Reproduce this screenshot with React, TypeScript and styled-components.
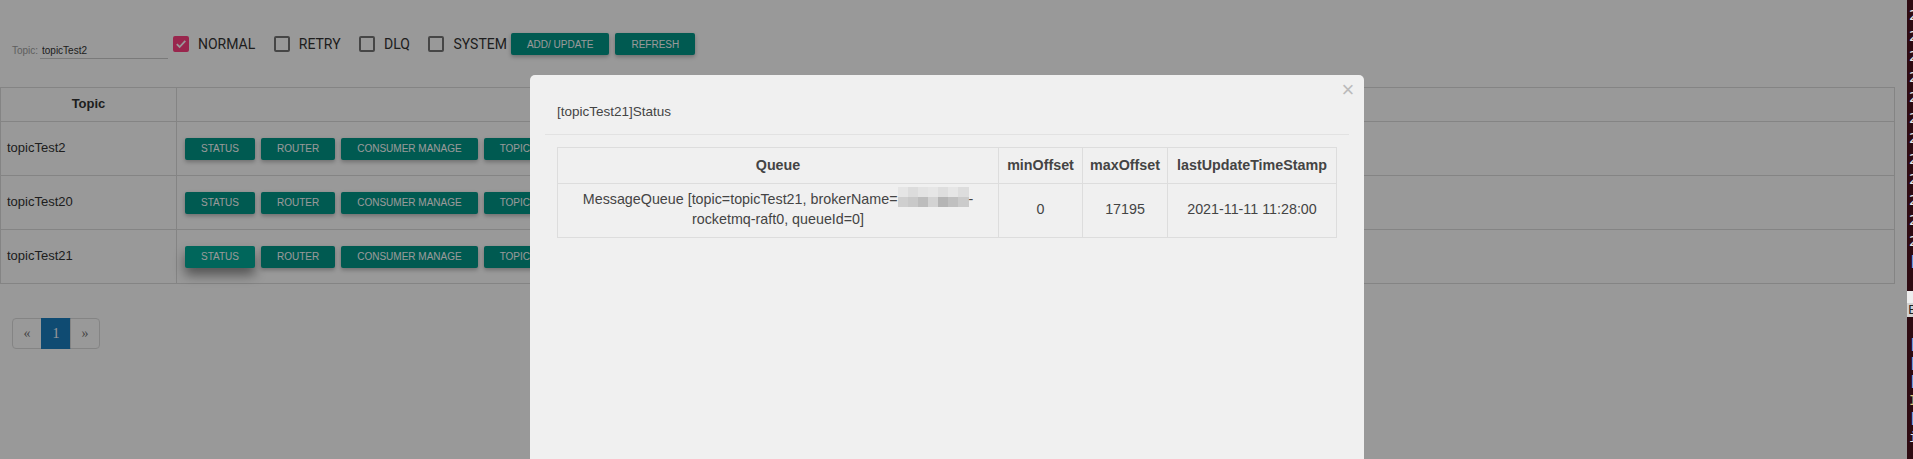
import React from 'react';
import styled, { createGlobalStyle, css } from 'styled-components';

const GlobalStyle = createGlobalStyle`
  html, body {
    margin: 0;
    padding: 0;
    overflow: hidden;
    background: #2e0b12;
  }
  * {
    box-sizing: border-box;
  }
`;

const Screen = styled.div`
  display: flex;
  width: 1913px;
  height: 459px;
  overflow: hidden;
`;

const Page = styled.main`
  position: relative;
  flex: 1;
  height: 100%;
  overflow: hidden;
  padding-right: 12px;
  background: #fff;
  color: #333;
  font-family: 'Liberation Sans', Arial, sans-serif;
  font-size: 13px;
  line-height: 1.42857;
`;

const Toolbar = styled.div`
  display: flex;
  align-items: flex-start;
  height: 87px;
  padding: 33px 0 0 12px;
`;

const TopicField = styled.label`
  display: flex;
  align-items: flex-end;
  height: 26px;
  margin-right: 5px;
`;

const FieldLabel = styled.span`
  width: 28px;
  padding-bottom: 2px;
  font-size: 10px;
  line-height: 12px;
  color: #9e9e9e;
`;

const FieldInput = styled.input`
  width: 128px;
  height: 17px;
  padding: 0 2px;
  border: 0;
  border-bottom: 1px solid #ccc;
  background: transparent;
  font-family: 'Liberation Sans', Arial, sans-serif;
  font-size: 10px;
  color: #333;
  outline: none;
`;

const CheckGroup = styled.div`
  display: flex;
  gap: 18.5px;
  margin-top: 3px;
`;

const Check = styled.label`
  display: flex;
  align-items: center;
  gap: 9px;
  font-family: Roboto, 'Liberation Sans', sans-serif;
  font-size: 14px;
  line-height: 16px;
  color: #333;
`;

const CheckBox = styled.span<{ $checked?: boolean }>`
  display: flex;
  align-items: center;
  justify-content: center;
  width: 16px;
  height: 16px;
  border: 2px solid rgba(0, 0, 0, 0.54);
  border-radius: 2px;
  ${(p) =>
    p.$checked &&
    css`
      background: #ff4081;
      border-color: #ff4081;
    `}
`;

const ButtonGroup = styled.div`
  display: flex;
  gap: 6px;
  margin-left: 4px;
`;

const RaisedButton = styled.button<{ $focused?: boolean }>`
  height: 22px;
  padding: 0 16px;
  border: 0;
  border-radius: 2px;
  background: #009688;
  color: #fff;
  font-family: 'Liberation Sans', Arial, sans-serif;
  font-size: 10px;
  text-transform: uppercase;
  white-space: nowrap;
  box-shadow: 0 2px 4px rgba(0, 0, 0, 0.28);
  ${(p) =>
    p.$focused &&
    css`
      background: #00aa98;
      box-shadow: 0 7px 12px rgba(0, 0, 0, 0.45);
    `}
`;

const TopicTable = styled.table`
  width: 100%;
  border-collapse: collapse;
  border: 1px solid #ddd;
`;

const HeadCell = styled.th<{ $width?: number }>`
  width: ${(p) => (p.$width ? `${p.$width}px` : 'auto')};
  height: 34px;
  padding: 0 8px;
  border: 1px solid #ddd;
  font-weight: bold;
  text-align: center;
`;

const Cell = styled.td`
  height: 54px;
  padding: 0 6px;
  border: 1px solid #ddd;
  vertical-align: middle;
`;

const ActionCell = styled(Cell)`
  padding: 0 8px;
`;

const ActionBar = styled.div`
  display: flex;
  gap: 6px;
`;

const Pager = styled.nav`
  display: inline-flex;
  margin: 34px 0 0 12px;
`;

const PageItem = styled.span<{ $active?: boolean }>`
  width: 30px;
  padding: 5px 0;
  margin-left: -1px;
  border: 1px solid #ddd;
  font-family: 'Liberation Serif', 'Times New Roman', serif;
  font-size: 14px;
  line-height: 19px;
  text-align: center;
  color: #777;
  &:first-child {
    margin-left: 0;
    border-radius: 4px 0 0 4px;
  }
  &:last-child {
    border-radius: 0 4px 4px 0;
  }
  ${(p) =>
    p.$active &&
    css`
      background: #1a7dbf;
      border-color: #1a7dbf;
      color: #fff;
    `}
`;

const Backdrop = styled.div`
  position: absolute;
  inset: 0;
  background: rgba(0, 0, 0, 0.4);
`;

const Dialog = styled.section`
  position: absolute;
  left: 530px;
  top: 75px;
  width: 834px;
  height: 460px;
  padding: 15px;
  border-radius: 5px;
  background: #f0f0f0;
  color: #444;
  font-family: 'Liberation Sans', Helvetica, sans-serif;
  font-size: 14.3px;
`;

const CloseButton = styled.button`
  position: absolute;
  top: 0;
  right: 1px;
  width: 30px;
  height: 30px;
  padding: 0;
  border: 0;
  background: transparent;
  font-family: 'Liberation Sans', Helvetica, sans-serif;
  font-size: 22px;
  line-height: 26px;
  color: #bbb;
`;

const DialogHeader = styled.header`
  padding: 12px;
  border-bottom: 1px solid #e2e2e2;
`;

const DialogTitle = styled.h4`
  margin: 0;
  font-size: 13.5px;
  font-weight: normal;
  line-height: 20px;
`;

const DialogBody = styled.div`
  padding: 12px;
`;

const StatusTable = styled.table`
  width: 100%;
  border-collapse: collapse;
  border: 1px solid #ddd;
  line-height: 19.5px;
`;

const StatusHead = styled.th<{ $width: number }>`
  width: ${(p) => p.$width}px;
  padding: 8px 6px;
  line-height: 19px;
  border: 1px solid #ddd;
  text-align: center;
  font-weight: bold;
  white-space: nowrap;
`;

const StatusCell = styled.td`
  padding: 6px 8px 8px;
  border: 1px solid #ddd;
  text-align: center;
  vertical-align: middle;
`;

const NoBreak = styled.span`
  white-space: nowrap;
`;

/* pixelated (redacted) broker name */
const Mosaic = styled.span`
  display: inline-block;
  width: 71px;
  height: 20px;
  margin-top: -4px;
  overflow: hidden;
  vertical-align: -3px;
`;

const MosaicGrid = styled.span`
  display: grid;
  grid-template-columns: repeat(7, 1fr);
  grid-template-rows: 10px 10px;
  height: 100%;
`;

const Tile = styled.span<{ $shade: string }>`
  background: ${(p) => p.$shade};
`;

const Terminal = styled.aside`
  display: flex;
  flex-direction: column;
  width: 6px;
  height: 100%;
  overflow: hidden;
  background: #2e0b12;
`;

const TermPane = styled.div<{ $line: number; $top: number; $height: number }>`
  flex: none;
  height: ${(p) => p.$height}px;
  overflow: hidden;
  padding: ${(p) => p.$top}px 0 0 2px;
  font-family: 'DejaVu Sans Mono', 'Liberation Mono', monospace;
  font-size: 14px;
  line-height: ${(p) => p.$line}px;
  white-space: pre;
  color: #e8e8e8;
`;

const TermLine = styled.div<{ $tone?: string }>`
  color: ${(p) => p.$tone || '#e8e8e8'};
`;

const TermTab = styled.div<{ $shade: string; $height: number }>`
  flex: none;
  height: ${(p) => p.$height}px;
  overflow: hidden;
  padding-left: 1px;
  font-family: 'DejaVu Sans', sans-serif;
  font-size: 13px;
  line-height: ${(p) => p.$height}px;
  white-space: pre;
  color: #222;
  background: ${(p) => p.$shade};
`;

const topics = ['topicTest2', 'topicTest20', 'topicTest21'];
const actions = ['Status', 'Router', 'Consumer Manage', 'Topic Config', 'Send Message', 'Reset Consumer Offset', 'Delete'];
const filters = [
  { name: 'NORMAL', checked: true },
  { name: 'RETRY', checked: false },
  { name: 'DLQ', checked: false },
  { name: 'SYSTEM', checked: false },
];
const mosaic = [
  '#e5e5e5', '#dcdcdc', '#e3e3e3', '#e6e6e6', '#dedede', '#e6e6e6', '#dddddd',
  '#cfcfcf', '#c9c9c9', '#bdbdbd', '#d3d3d3', '#b5b5b5', '#c0c0c0', '#cbcbcb',
];
const logLines = Array.from({ length: 12 }, (_, i) => `2021-11-11 11:28:${String(i).padStart(2, '0')} INFO`);

export default function App() {
  return (
    <>
      <GlobalStyle />
      <Screen>
        <Page>
          <Toolbar>
            <TopicField>
              <FieldLabel>Topic:</FieldLabel>
              <FieldInput defaultValue="topicTest2" />
            </TopicField>
            <CheckGroup>
              {filters.map((f) => (
                <Check key={f.name}>
                  <CheckBox $checked={f.checked}>
                    {f.checked && (
                      <svg width="12" height="12" viewBox="0 0 12 12">
                        <path d="M1.8 6.2 L4.6 9 L10.3 2.9" fill="none" stroke="#fff" strokeWidth="1.8" />
                      </svg>
                    )}
                  </CheckBox>
                  {f.name}
                </Check>
              ))}
            </CheckGroup>
            <ButtonGroup>
              <RaisedButton>Add/ Update</RaisedButton>
              <RaisedButton>Refresh</RaisedButton>
            </ButtonGroup>
          </Toolbar>

          <TopicTable>
            <thead>
              <tr>
                <HeadCell $width={176}>Topic</HeadCell>
                <HeadCell />
              </tr>
            </thead>
            <tbody>
              {topics.map((t, row) => (
                <tr key={t}>
                  <Cell>{t}</Cell>
                  <ActionCell>
                    <ActionBar>
                      {actions.map((a, i) => (
                        <RaisedButton key={a} $focused={row === 2 && i === 0}>
                          {a}
                        </RaisedButton>
                      ))}
                    </ActionBar>
                  </ActionCell>
                </tr>
              ))}
            </tbody>
          </TopicTable>

          <Pager>
            <PageItem>«</PageItem>
            <PageItem $active>1</PageItem>
            <PageItem>»</PageItem>
          </Pager>

          <Backdrop />
          <Dialog>
            <CloseButton>×</CloseButton>
            <DialogHeader>
              <DialogTitle>[topicTest21]Status</DialogTitle>
            </DialogHeader>
            <DialogBody>
              <StatusTable>
                <thead>
                  <tr>
                    <StatusHead $width={442}>Queue</StatusHead>
                    <StatusHead $width={84}>minOffset</StatusHead>
                    <StatusHead $width={85}>maxOffset</StatusHead>
                    <StatusHead $width={169}>lastUpdateTimeStamp</StatusHead>
                  </tr>
                </thead>
                <tbody>
                  <tr>
                    <StatusCell>
                      MessageQueue [topic=topicTest21,{' '}
                      <NoBreak>
                        brokerName=
                        <Mosaic>
                          <MosaicGrid>
                            {mosaic.map((s, i) => (
                              <Tile key={i} $shade={s} />
                            ))}
                          </MosaicGrid>
                        </Mosaic>
                        -
                      </NoBreak>
                      rocketmq-raft0, queueId=0]
                    </StatusCell>
                    <StatusCell>0</StatusCell>
                    <StatusCell>17195</StatusCell>
                    <StatusCell>2021-11-11 11:28:00</StatusCell>
                  </tr>
                </tbody>
              </StatusTable>
            </DialogBody>
          </Dialog>
        </Page>

        <Terminal>
          <TermPane $line={20.5} $top={5} $height={291}>
            {logLines.map((l, i) => (
              <TermLine key={i}>{l}</TermLine>
            ))}
            <TermLine $tone="#8fb4e8">[INFO] done</TermLine>
          </TermPane>
          <TermTab $shade="#eeeeee" $height={12} />
          <TermTab $shade="#d2d2d2" $height={14}>
            E
          </TermTab>
          <TermPane $line={18.5} $top={18} $height={142}>
            <TermLine $tone="#9cb8e6">[root@broker]</TermLine>
            <TermLine $tone="#9cb8e6">[root@broker]</TermLine>
            <TermLine $tone="#9cb8e6">[root@broker]</TermLine>
            <TermLine $tone="#e0c878">INFO</TermLine>
            <TermLine $tone="#9cb8e6">[root@broker]</TermLine>
            <TermLine>i</TermLine>
          </TermPane>
        </Terminal>
      </Screen>
    </>
  );
}
